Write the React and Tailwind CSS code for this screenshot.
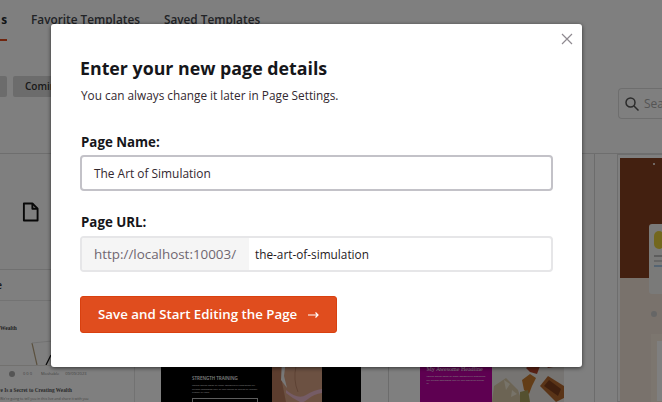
import React from 'react';

const font = { fontFamily: '"Open Sans", sans-serif' };
const serif = { fontFamily: '"Liberation Serif", serif' };

function PreviewCards() {
  return (
    <div className="flex -ml-[65px] h-[248px]">
      {/* first template, mostly hidden behind the modal */}
      <div className="w-[200px] shrink-0 border-r border-[#e4e4e4] flex flex-col">
        <div className="h-[116px] shrink-0 flex items-center justify-center border-b border-[#e0e0e0] pr-[8px]">
          <svg width="17" height="20" viewBox="0 0 18 21" fill="none" stroke="#111" strokeWidth="2" strokeLinejoin="round">
            <path d="M2 1.500h9l5.500 5.500v12.500h-14.500z" />
            <path d="M11 1.500v5.500h5.500" />
          </svg>
        </div>
        <div className="h-[31px] shrink-0 border-b border-[#e6e6e6] flex items-center justify-end pr-[132px] text-[11px] font-semibold text-[#333]">e</div>
        <div className="flex-1 overflow-hidden flex flex-col">
          <div className="h-[64px] shrink-0 pt-[23px] pl-[65px] flex flex-col">
            <div className="w-[15px] text-right text-[5.500px] leading-[8px] font-bold text-[#444]" style={serif}>Wealth</div>
            <svg width="60" height="33" viewBox="0 0 60 33">
              <path d="M32 11l5 22" stroke="#b7a27e" strokeWidth="1.200" fill="none" />
              <path d="M32 11l20-2" stroke="#ddd" strokeWidth="0.800" fill="none" />
              <path d="M46 33l5-10" stroke="#111" strokeWidth="1.200" fill="none" />
            </svg>
          </div>
          <div className="flex-1 border-t border-[#e4e2df]">
            <div className="flex items-center pl-[74px] pt-[4px] text-[4px] leading-[8px] text-[#888] whitespace-nowrap">
              <span className="w-[6px] h-[6px] rounded-full bg-[#aaa] mr-[8px]" />
              <span className="mr-[9px]">0 0 0</span>
              <span className="mr-[6px]">Moshable</span>
              <span>09/09/2023</span>
            </div>
            <div className="text-[5.300px] leading-[9px] font-bold text-[#555] mt-[8px] pr-[62px] text-right whitespace-nowrap" style={serif}>Love Is a Secret to Creating Wealth</div>
            <div className="text-[3.500px] leading-[5px] text-[#888] mt-[1px] pl-[65px] whitespace-nowrap">We're going to tell you in this live and share it with you</div>
          </div>
        </div>
      </div>

      {/* second template */}
      <div className="w-[226px] shrink-0 pl-[26px] flex items-end">
        <div className="w-full h-[42px] bg-black flex overflow-hidden">
          <div className="w-[111px] pl-[31px] pt-[15px] text-white shrink-0">
            <div className="text-[4.500px] leading-[6px] font-semibold whitespace-nowrap">STRENGTH TRAINING</div>
            <div className="text-[2.500px] leading-[3.500px] mt-[3px] w-[68px] text-[#eee]">Lorem ipsum dolor sit amet consectetur adipiscing elit nullam commodo velit ex nec ipsum ac auctor at integer blandit ex nibh</div>
            <div className="w-[66px] h-[10px] border border-[#bbb] mt-[3px]" />
          </div>
          <svg width="50" height="42" viewBox="0 0 50 42" className="shrink-0">
            <rect width="50" height="42" fill="#d9a284" />
            <path d="M0 0h14l-4 22 4 20H0z" fill="#b87a5c" />
            <path d="M10 0h4l-2 16 3 12-6-8z" fill="#f1f1f1" />
            <path d="M14 0h36v3H14z" fill="#d6dbe6" />
            <path d="M24 6q-3 14 2 26" stroke="#bb8568" strokeWidth="1" fill="none" />
            <path d="M14 30q12 10 20 5t16-6v4q-8 1-14 6t-8 3q-8-4-14-9z" fill="#eab8cc" />
          </svg>
        </div>
      </div>

      {/* third template */}
      <div className="w-[234px] shrink-0 pl-[27px]">
        <div className="h-full border-x border-[#d8d8d8] flex items-end justify-center">
          <div className="w-[144px] h-[42px] flex overflow-hidden">
            <div className="w-[72px] bg-[#bc00a2] text-white pl-[7px] pt-[6px]">
              <div className="text-[6px] leading-[7px] whitespace-nowrap" style={serif}>My Awesome Headline</div>
              <div className="text-[2.500px] leading-[3.500px] mt-[2px] w-[60px]">Lorem ipsum dolor sit amet consectetur adipiscing elit nullam commodo velit ex nec ipsum ac auctor at</div>
            </div>
            <svg width="72" height="42" viewBox="0 0 72 42" className="shrink-0">
              <rect width="72" height="42" fill="#ece9e4" />
              <path d="M2 26l12-8 12 12 4 12H0z" fill="#d8c9a8" />
              <path d="M12 20l6 4-4 6zM20 30l5 4-6 3z" fill="#efe6d2" />
              <path d="M30 20l8-6 6 4-4 8-3 8-5-4z" fill="#c77a2e" />
              <path d="M28 32l8-2 2 12h-10z" fill="#a8a05e" />
              <path d="M34 8l6-5 8 3-3 8-7-2z" fill="#b3452a" />
              <path d="M50 0h22v5l-16 3z" fill="#a84a2c" />
              <path d="M48 26l8-10 16 10v12l-8 4z" fill="#b5682f" />
              <path d="M52 26l5-6 12 9-3 7z" fill="#7f3f1c" />
            </svg>
          </div>
        </div>
      </div>

      {/* fourth template */}
      <div className="w-[120px] shrink-0 ml-[22px] border border-[#dcdcdc] pt-[3px] pl-[2px]">
        <div className="h-[120px] bg-[#864020] relative">
          <div className="absolute left-[33px] top-[5px] w-[2px] h-[2px] rounded-full bg-white" />
          <div className="absolute left-[29px] top-[66px] w-[20px] h-[70px] bg-[#f4f4f2] rounded-[3px] pl-[5px] pt-[7px]">
            <div className="w-[10px] h-[18px] bg-[#e6cf3c] rounded-full" />
            <div className="h-[2px] w-[10px] bg-[#bbb] mt-[6px]" />
            <div className="h-[2px] w-[10px] bg-[#ccc] mt-[3px]" />
            <div className="h-[2px] w-[10px] bg-[#aac8e4] mt-[3px]" />
          </div>
        </div>
        <div className="h-[124px] bg-[#f2e4d9] pl-[31px] pt-[33px]">
          <div className="w-[6px] h-[6px] bg-[#ccc] rounded-full" />
          <div className="w-[30px] h-[70px] bg-[#f8ecdf] mt-[17px] pl-[6px] pt-[7px]">
            <div className="w-[20px] h-[60px] bg-white" />
          </div>
        </div>
      </div>
    </div>
  );
}

function BackgroundPage() {
  return (
    <div className="w-full h-full bg-white overflow-hidden flex flex-col text-[#333]">
      <div className="h-[41px] relative flex gap-[24px] pt-[10px] text-[11.800px] font-semibold whitespace-nowrap leading-[18px] shrink-0">
        <span className="w-[7px] overflow-hidden flex justify-end text-[#23282d] font-bold">s</span>
        <span className="text-[#43464d]">Favorite Templates</span>
        <span className="text-[#43464d]">Saved Templates</span>
        <div className="absolute left-0 bottom-0 w-[7px] h-[2px] bg-[#e04d1e]" />
      </div>
      <div className="h-[113px] shrink-0 flex justify-between items-start border-b border-[#dcdcdc]">
        <div className="flex gap-[6px] mt-[35px]">
          <div className="w-[7px] h-[21px] bg-[#d8d8d8] rounded-r-[2px]" />
          <div className="w-[70px] h-[21px] bg-[#d8d8d8] rounded-[2px] pl-[12px] text-[10px] font-semibold leading-[21px]">Coming</div>
        </div>
        <div className="mt-[47px] w-[44px] h-[31px] border border-[#dcdcdc] rounded-l-[4px] border-r-0 flex items-center pl-[6px] gap-[5px] overflow-hidden">
          <svg width="14" height="14" viewBox="0 0 14 14" fill="none" stroke="#555" strokeWidth="1.500" className="shrink-0">
            <circle cx="5.500" cy="5.500" r="4.500" />
            <path d="M9 9l4.500 4.500" />
          </svg>
          <span className="text-[12px] text-[#aaa]">Search</span>
        </div>
      </div>
      <PreviewCards />
    </div>
  );
}

export default function App() {
  return (
    <div className="relative w-[662px] h-[402px] overflow-hidden" style={font}>
      <BackgroundPage />
      <div className="absolute inset-0 bg-black/50" />

      <div className="absolute left-[51px] top-[24px] w-[531px] h-[343px] bg-white rounded-[3px] shadow-[0_1px_4px_rgba(0,0,0,0.6)] px-[29px] pt-[32px]">
        <button className="absolute right-[9px] top-[9px] text-[#8f8a90]">
          <svg width="12" height="12" viewBox="0 0 12 12" fill="none" stroke="currentColor" strokeWidth="1.200">
            <path d="M1 1l10 10M11 1L1 11" />
          </svg>
        </button>

        <h2 className="text-[17.800px] leading-[25px] font-bold text-[#16161a]">Enter your new page details</h2>
        <p className="text-[11.800px] leading-[17px] mt-[6px] text-[#32282f] pl-[1px]">You can always change it later in Page Settings.</p>

        <label className="block text-[13.300px] leading-[18px] font-bold text-[#16161a] mt-[29px] pl-[1px]">Page Name:</label>
        <div className="mt-[4px] h-[36px] border-2 border-[#c3c2c8] rounded-[4px] flex items-center pl-[12px] pt-[1px] text-[11.900px] text-[#32282f]">The Art of Simulation</div>

        <label className="block text-[13.300px] leading-[18px] font-bold text-[#16161a] mt-[22px] pl-[1px]">Page URL:</label>
        <div className="mt-[5px] h-[36px] border-2 border-[#e6e6e8] rounded-[4px] flex items-stretch overflow-hidden">
          <div className="w-[167px] bg-[#f5f5f5] flex items-center pl-[12px] pt-[1px] text-[13.400px] text-[#6f6670] whitespace-nowrap">http://localhost:10003/</div>
          <div className="flex items-center pl-[6px] pt-[1px] text-[11.800px] text-[#1f1a1e]">the-art-of-simulation</div>
        </div>

        <button className="mt-[24px] w-[257px] h-[37px] bg-[#e04d1e] border border-[#d9400f] rounded-[3px] text-white text-[13.300px] font-semibold flex items-center pl-[17px] gap-[11px] whitespace-nowrap">
          Save and Start Editing the Page
          <svg width="11" height="8" viewBox="0 0 11 8" fill="none" stroke="currentColor" strokeWidth="1.200">
            <path d="M0 4h10M7.500 1.500L10 4 7.500 6.500" />
          </svg>
        </button>
      </div>
    </div>
  );
}
